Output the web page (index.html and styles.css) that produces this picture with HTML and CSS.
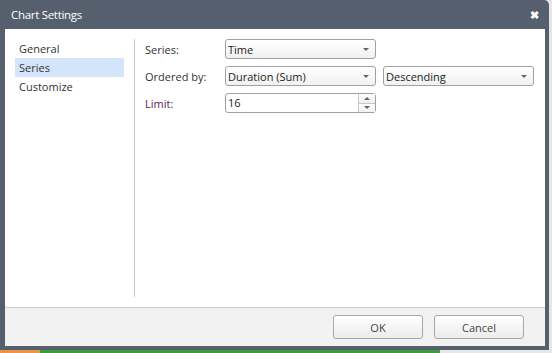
FILE: index.html
```html
<!DOCTYPE html>
<html lang="en">

<head>
  <meta charset="UTF-8">
  <title>Chart Settings</title>
  <link rel="stylesheet" href="styles.css">
</head>

<body>

  <div class="dialog">
    <div class="dialog-header">
      <span class="dialog-title">Chart Settings</span>
      <span class="dialog-close">&#x2716;</span>
    </div>

    <div class="dialog-body">
      <ul class="nav">
        <li>General</li>
        <li class="active">Series</li>
        <li>Customize</li>
      </ul>

      <div class="form">
        <div class="row">
          <label>Series:</label>
          <div class="select">Time<span class="caret"></span></div>
        </div>
        <div class="row">
          <label>Ordered by:</label>
          <div class="select">Duration (Sum)<span class="caret"></span></div>
          <div class="select">Descending<span class="caret"></span></div>
        </div>
        <div class="row">
          <label class="focus">Limit:</label>
          <div class="spinner">
            <span class="value">16</span>
            <span class="arrows">
              <span class="up"></span>
              <span class="down"></span>
            </span>
          </div>
        </div>
      </div>
    </div>

    <div class="dialog-footer">
      <button class="btn">OK</button>
      <button class="btn">Cancel</button>
    </div>
  </div>

  <div class="strip">
    <span class="orange"></span>
    <span class="green"></span>
  </div>

</body>

</html>
```

FILE: styles.css
```css
body {
  margin: 0;
  background: #e6e6e6;
  font-family: "Open Sans", "Noto Sans", sans-serif;
  font-size: 11px;
  color: #333;
  width: 552px;
  height: 353px;
  overflow: hidden;
}

.dialog {
  width: 549px;
  height: 350px;
  box-sizing: border-box;
  background: #555f6e;
  border-top-right-radius: 5px;
  padding: 0 4px 4px 5px;
  display: flex;
  flex-direction: column;
}

.dialog-header {
  height: 29px;
  display: flex;
  align-items: center;
  justify-content: space-between;
  padding: 0 6px 0 6px;
  color: #fff;
}

.dialog-title {
  font-size: 11.5px;
  letter-spacing: -0.3px;
}

.dialog-close {
  font-size: 11px;
  font-weight: bold;
  margin-top: -1px;
}

.dialog-body {
  flex: 1;
  background: #fff;
  display: flex;
  padding: 10px 0 10px 0;
  border-bottom: 1px solid #ccc;
}

.nav {
  list-style: none;
  margin: 0;
  padding: 0 0 0 10px;
  width: 119px;
  border-right: 1px solid #ccc;
}

.nav li {
  height: 19px;
  line-height: 19px;
  padding-left: 4px;
  width: 105px;
}

.nav li.active {
  background: #d4e5fb;
}

.form {
  padding-left: 10px;
  display: flex;
  flex-direction: column;
  gap: 7px;
}

.row {
  display: flex;
  align-items: center;
  gap: 7px;
  height: 20px;
}

.row label {
  width: 73px;
}

.row label.focus {
  color: #58244f;
}

.select {
  position: relative;
  width: 151px;
  height: 20px;
  line-height: 19px;
  box-sizing: border-box;
  border: 1px solid #a0a0a0;
  border-radius: 3px;
  background: linear-gradient(#ffffff, #f1f1f1);
  padding-left: 2px;
  color: #222;
}

.caret {
  position: absolute;
  right: 6px;
  top: 8px;
  border-left: 3px solid transparent;
  border-right: 3px solid transparent;
  border-top: 3px solid #666;
}

.spinner {
  width: 151px;
  height: 20px;
  box-sizing: border-box;
  border: 1px solid #a0a0a0;
  border-radius: 3px;
  display: flex;
  background: #fff;
}

.spinner .value {
  flex: 1;
  line-height: 18px;
  padding-left: 2px;
  color: #222;
}

.arrows {
  width: 16px;
  border-left: 1px solid #c8c8c8;
  display: flex;
  flex-direction: column;
}

.arrows span {
  flex: 1;
  display: flex;
  align-items: center;
  justify-content: center;
  background: linear-gradient(#ffffff, #f0f0f0);
}

.arrows .up {
  border-bottom: 1px solid #c8c8c8;
}

.arrows .up::after {
  content: "";
  border-left: 3px solid transparent;
  border-right: 3px solid transparent;
  border-bottom: 3px solid #666;
}

.arrows .down::after {
  content: "";
  border-left: 3px solid transparent;
  border-right: 3px solid transparent;
  border-top: 3px solid #666;
}

.dialog-footer {
  height: 38px;
  background: #f2f2f2;
  display: flex;
  align-items: center;
  justify-content: flex-end;
  gap: 11px;
  padding-right: 21px;
}

.btn {
  width: 90px;
  height: 24px;
  border: 1px solid #a8a8a8;
  border-radius: 3px;
  background: linear-gradient(#ffffff, #ececec);
  font-family: inherit;
  font-size: 11px;
  color: #444;
  padding: 0;
}

.strip {
  display: flex;
  height: 3px;
}

.strip .orange {
  width: 40px;
  background: #e8954a;
}

.strip .green {
  width: 400px;
  background: #3d9a3d;
}
```
